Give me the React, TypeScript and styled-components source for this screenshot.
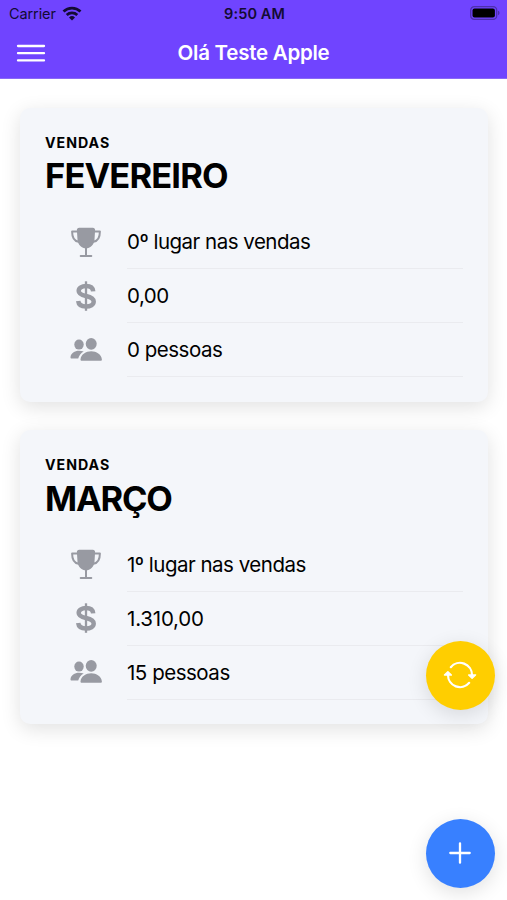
import React from "react";
import styled, { createGlobalStyle } from "styled-components";

const GlobalStyle = createGlobalStyle`
  * { box-sizing: border-box; }
  body { margin: 0; background: #fff; color: #000; font-family: Inter, "Liberation Sans", sans-serif; }
`;

const Screen = styled.div`
  position: relative;
  height: 900px;
  overflow: hidden;
  background: #fff;
`;

const Header = styled.header`
  height: 79px;
  background: #7044ff;
  border-bottom: 1px solid #8a68f6;
`;

const StatusBar = styled.div`
  display: grid;
  grid-template-columns: 1fr auto 1fr;
  align-items: center;
  height: 27px;
  padding: 0 7px 0 9px;
  color: #130b33;
  font-size: 14.5px;
`;

const Carrier = styled.div`
  display: flex;
  align-items: center;
  gap: 6px;
  letter-spacing: -0.1px;

  svg {
    margin-top: -1px;
  }
`;

const Clock = styled.div`
  font-weight: 600;
  letter-spacing: 0.1px;
`;

const BatterySlot = styled.div`
  display: flex;
  justify-content: flex-end;
  padding-bottom: 1px;
`;

const Toolbar = styled.div`
  display: grid;
  grid-template-columns: 60px 1fr 60px;
  align-items: center;
  height: 51px;
`;

const MenuButton = styled.button`
  display: flex;
  padding: 0 0 0 16px;
  border: 0;
  background: none;
`;

const Title = styled.h1`
  margin: 0;
  color: #fff;
  font-size: 20.5px;
  font-weight: 600;
  letter-spacing: -0.25px;
  text-align: center;
`;

const Cards = styled.main`
  display: flex;
  flex-direction: column;
  gap: 28.5px;
  padding: 28.5px 19px 0 20px;
`;

const Card = styled.section`
  height: 294px;
  padding: 26px 25px 0;
  border-radius: 10px;
  background: #f4f6fa;
  box-shadow: 0 5px 20px rgba(0, 0, 0, 0.12);
`;

const Subtitle = styled.div`
  font-size: 14.2px;
  font-weight: 700;
  line-height: 17px;
  letter-spacing: 0.98px;
`;

const Month = styled.h2<{ $spacing: number }>`
  margin: 4.5px 0 19.5px;
  font-size: 34.5px;
  font-weight: 700;
  line-height: 41px;
  letter-spacing: ${(p) => p.$spacing}px;
`;

const Row = styled.div`
  display: grid;
  grid-template-columns: 82px 1fr;
  height: 53.9px;
`;

const IconCell = styled.div`
  display: flex;
  align-items: center;
  justify-content: center;
  padding-bottom: 1px;
  color: #989aa2;
`;

const RowText = styled.div<{ $spacing: number }>`
  display: flex;
  align-items: center;
  border-bottom: 1px solid #eaebef;
  font-size: 20.5px;
  letter-spacing: ${(p) => p.$spacing}px;
`;

const Fab = styled.button<{ $color: string; $top: number }>`
  position: absolute;
  top: ${(p) => p.$top}px;
  left: 426px;
  display: flex;
  align-items: center;
  justify-content: center;
  width: 69px;
  height: 69px;
  padding: 0 1px 1px 0;
  border: 0;
  border-radius: 50%;
  background: ${(p) => p.$color};
  color: #fff;
  box-shadow: 0 5px 20px rgba(0, 0, 0, 0.12);
`;

const WifiIcon = () => (
  <svg width="20" height="15" viewBox="0 0 20 15" fill="none" stroke="#130b33" strokeWidth="2.7">
    <path d="M1.5 5.500a12.200 12.200 0 0 1 17 0" />
    <path d="M4.700 9a7.700 7.700 0 0 1 10.600 0" />
    <path d="M10 14.400 7 11.400a4.300 4.300 0 0 1 6 0z" fill="#130b33" stroke="none" />
  </svg>
);

const BatteryIcon = () => (
  <svg width="30" height="14" viewBox="0 0 30 14">
    <rect x="0.7" y="0.7" width="26" height="12.6" rx="3.6" fill="none" stroke="#4d30ad" strokeWidth="1.3" />
    <rect x="2.500" y="2.500" width="22.400" height="9" rx="2" fill="#000" />
    <path d="M28 4.800c2 .5 2 3.900 0 4.400z" fill="#4d30ad" />
  </svg>
);

const MenuIcon = () => (
  <svg width="30" height="20" viewBox="0 0 30 20" stroke="#fff" strokeWidth="2.3" strokeLinecap="round">
    <path d="M2 3h26M2 10.200h26M2 17.400h26" />
  </svg>
);

const TrophyIcon = () => (
  <svg width="34" height="34" viewBox="0 0 34 34" fill="none" stroke="currentColor" strokeWidth="2" strokeLinecap="round" strokeLinejoin="round">
    <path d="M10.200 2.700h13.600c1.500 0 2.400 1 2.300 2.400l-.6 9.600c-.4 5.200-4.400 8.600-8.500 8.600s-8.100-3.400-8.500-8.600l-.6-9.600c-.1-1.400.8-2.400 2.300-2.400z" fill="currentColor" stroke="none" />
    <path d="M8 6.500H3.100c0 5.700 2 9.600 6.400 10.200M26 6.500h4.900c0 5.700-2 9.600-6.400 10.200" />
    <path d="M17 22v8.600M11.700 30.900h10.600" />
  </svg>
);

const DollarIcon = () => (
  <svg width="34" height="34" viewBox="0 0 34 34" fill="none" stroke="currentColor" strokeWidth="4.500">
    <path d="M24.200 12.400C23.900 8.900 21 7.100 17 7.100S9.700 8.900 9.700 11.900c0 3.100 3 4.100 7.300 5.100s7.700 2.100 7.700 5.500S21.300 27.500 17 27.500 9.600 25.700 9.200 22" />
    <path d="M17 2.300v29.500" strokeWidth="2.300" />
  </svg>
);

const PeopleIcon = () => (
  <svg width="34" height="34" viewBox="0 0 34 34" fill="currentColor">
    <ellipse cx="10" cy="11.600" rx="4.700" ry="5" />
    <path d="M14.700 18.400c-1.400-.5-3-.7-4.700-.7-4.300 0-8.200 2.600-8.500 6.500-.1.800.4 1.300 1.200 1.300h6.500c.8-3.100 2.700-5.500 5.500-7.100z" />
    <ellipse cx="22.200" cy="10.800" rx="5.500" ry="5.900" />
    <path d="M22.200 18.300c-5.200 0-10.200 3-10.700 8.100-.1.900.5 1.400 1.300 1.400h18.800c.8 0 1.400-.5 1.300-1.400-.5-5.100-5.500-8.100-10.700-8.100z" />
  </svg>
);

const SyncIcon = () => (
  <svg width="34" height="34" viewBox="0 0 34 34" fill="none" stroke="#fff" strokeWidth="2.200" strokeLinecap="round" strokeLinejoin="round">
    <path d="M7.800 9.200A12 12 0 0 1 29 17v1.500" />
    <path d="M26.200 24.800A12 12 0 0 1 5 17v-1.500" />
    <path d="m25.700 16.900 3.400 3.400 3.400-3.400zM1.500 17.100l3.400-3.400 3.400 3.400z" fill="#fff" strokeWidth="1.500" />
  </svg>
);

const AddIcon = () => (
  <svg width="34" height="34" viewBox="0 0 34 34" stroke="#fff" strokeWidth="2.300" strokeLinecap="round">
    <path d="M17 7.300v19.400M7.300 17h19.400" />
  </svg>
);

type Sales = {
  month: string;
  spacing: number;
  place: string;
  total: string;
  totalSpacing: number;
  people: string;
};

const sales: Sales[] = [
  { month: "FEVEREIRO", spacing: -0.87, place: "0º lugar nas vendas", total: "0,00", totalSpacing: -0.5, people: "0 pessoas" },
  { month: "MARÇO", spacing: -1.2, place: "1º lugar nas vendas", total: "1.310,00", totalSpacing: -0.2, people: "15 pessoas" },
];

const SalesCard = ({ month, spacing, place, total, totalSpacing, people }: Sales) => (
  <Card>
    <Subtitle>VENDAS</Subtitle>
    <Month $spacing={spacing}>{month}</Month>
    <Row>
      <IconCell><TrophyIcon /></IconCell>
      <RowText $spacing={-0.5}>{place}</RowText>
    </Row>
    <Row>
      <IconCell><DollarIcon /></IconCell>
      <RowText $spacing={totalSpacing}>{total}</RowText>
    </Row>
    <Row>
      <IconCell><PeopleIcon /></IconCell>
      <RowText $spacing={-0.48}>{people}</RowText>
    </Row>
  </Card>
);

export default function App() {
  return (
    <Screen>
      <GlobalStyle />
      <Header>
        <StatusBar>
          <Carrier>Carrier <WifiIcon /></Carrier>
          <Clock>9:50 AM</Clock>
          <BatterySlot><BatteryIcon /></BatterySlot>
        </StatusBar>
        <Toolbar>
          <MenuButton aria-label="Menu"><MenuIcon /></MenuButton>
          <Title>Olá Teste Apple</Title>
        </Toolbar>
      </Header>
      <Cards>
        {sales.map((s) => <SalesCard key={s.month} {...s} />)}
      </Cards>
      <Fab $color="#ffce00" $top={641} aria-label="Atualizar"><SyncIcon /></Fab>
      <Fab $color="#3880ff" $top={819} aria-label="Adicionar"><AddIcon /></Fab>
    </Screen>
  );
}
